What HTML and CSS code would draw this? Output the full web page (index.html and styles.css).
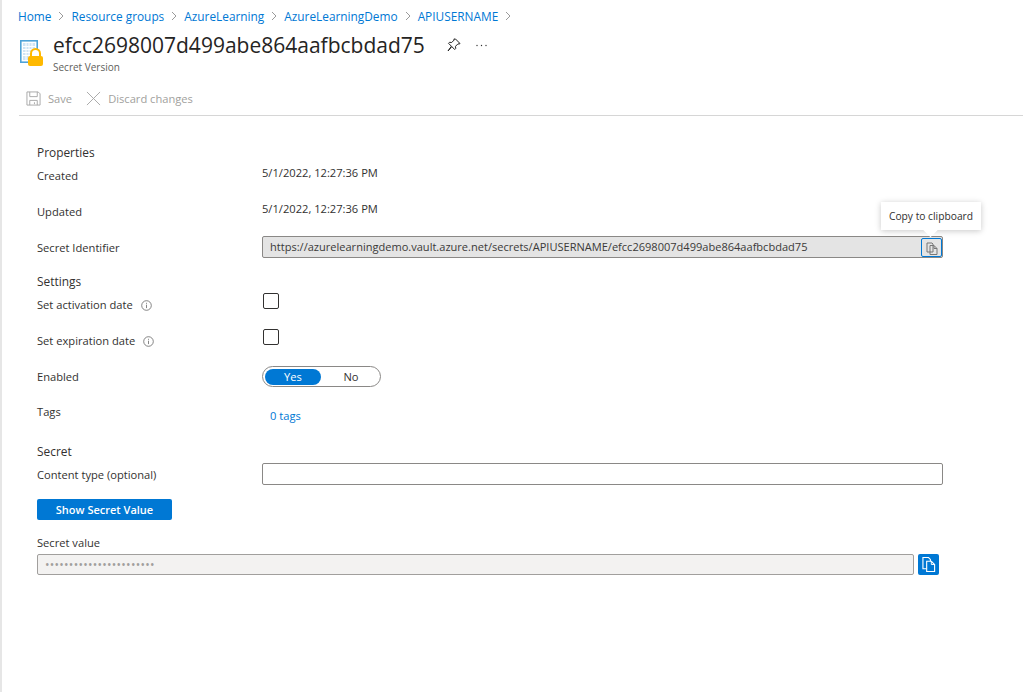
FILE: index.html
```html
<!DOCTYPE html>
<html lang="en">
<head>
<meta charset="utf-8">
<title>Secret Version</title>
<link rel="stylesheet" href="styles.css">
</head>
<body>
<div class="page">
  <nav class="crumbs">
    <a>Home</a><svg class="chev" viewBox="0 0 8 10"><path d="M2 1l4 4-4 4"/></svg>
    <a>Resource groups</a><svg class="chev" viewBox="0 0 8 10"><path d="M2 1l4 4-4 4"/></svg>
    <a>AzureLearning</a><svg class="chev" viewBox="0 0 8 10"><path d="M2 1l4 4-4 4"/></svg>
    <a>AzureLearningDemo</a><svg class="chev" viewBox="0 0 8 10"><path d="M2 1l4 4-4 4"/></svg>
    <a>APIUSERNAME</a><svg class="chev" viewBox="0 0 8 10"><path d="M2 1l4 4-4 4"/></svg>
  </nav>
  <header class="head">
    <svg class="res-icon" viewBox="0 0 23 26">
      <rect x="0.800" y="0.800" width="16.400" height="21.400" fill="#fff" stroke="#4fa3d8" stroke-width="1.600"/>
      <rect x="3" y="3" width="12" height="17" fill="#cfe4f4"/>
      <path d="M3 6.500h12M3 9.500h12M3 12.500h12M3 15.500h12M6 3v17M9 3v17M12 3v17" stroke="#fff" stroke-width="1"/>
      <path d="M11 16.500v-3a4.500 4.500 0 0 1 9 0v3" fill="#fff" stroke="#ffb900" stroke-width="2"/>
      <rect x="8" y="16" width="15" height="10" rx="2" fill="#ffb900"/>
    </svg>
    <div class="titles">
      <div class="title-row">
        <h1>efcc2698007d499abe864aafbcbdad75</h1>
        <svg class="pin" viewBox="0 0 14 14"><path d="M8.500 1l4.500 4.500-1 .6-1-.3-2.500 2.500.2 2.200-1 1L4.800 8.600 1 13l3.400-4.800L1.500 5.300l1-1 2.200.2L7.200 2l-.3-1z" fill="none" stroke="#222" stroke-width="1"/></svg>
        <svg class="more" viewBox="0 0 11 3"><circle cx="1" cy="1.500" r=".7"/><circle cx="5.500" cy="1.500" r=".7"/><circle cx="10" cy="1.500" r=".7"/></svg>
      </div>
      <div class="subtitle">Secret Version</div>
    </div>
  </header>
  <div class="toolbar">
    <span class="tool">
      <svg class="tool-icon" viewBox="0 0 16 16"><path d="M1 1h12l2 2v12H1zM4 1v5h8V1M4 15v-5h8v5M9 12v2" fill="none" stroke="#a6a6a6"/></svg>Save
    </span>
    <span class="tool">
      <svg class="tool-icon" viewBox="0 0 16 16"><path d="M1 1l14 14M15 1L1 15" fill="none" stroke="#a6a6a6"/></svg>Discard changes
    </span>
  </div>
  <main class="form">
    <div class="section s1">Properties</div>
    <div class="row h36 prop"><span class="label">Created</span><span class="value up">5/1/2022, 12:27:36 PM</span></div>
    <div class="row h36 prop"><span class="label">Updated</span><span class="value up">5/1/2022, 12:27:36 PM</span></div>
    <div class="row h22 id-row">
      <span class="label">Secret Identifier</span>
      <div class="id-box">
        <span class="id-text">https://azurelearningdemo.vault.azure.net/secrets/APIUSERNAME/efcc2698007d499abe864aafbcbdad75</span>
        <span class="copy-focus"><svg class="copy-svg" viewBox="0 0 12 13"><path d="M1 1h5l1 1v8H1z M4 3.500h4l3 3v6H4z M8 3.500v3h3" fill="#e4e4e4" stroke="#777" stroke-width="1"/></svg></span>
        <div class="tip">Copy to clipboard</div>
      </div>
    </div>
    <div class="section s2">Settings</div>
    <div class="row h36"><span class="label">Set activation date<svg class="info" viewBox="0 0 11 11"><circle cx="5.500" cy="5.500" r="4.800"/><path d="M5.500 4.700v3.400M5.500 2.800v1"/></svg></span><span class="check"></span></div>
    <div class="row h36"><span class="label">Set expiration date<svg class="info" viewBox="0 0 11 11"><circle cx="5.500" cy="5.500" r="4.800"/><path d="M5.500 4.700v3.400M5.500 2.800v1"/></svg></span><span class="check"></span></div>
    <div class="row h36"><span class="label">Enabled</span><div class="toggle"><span class="on">Yes</span><span class="off">No</span></div></div>
    <div class="row h36 tags"><span class="label">Tags</span><a class="tag-link">0 tags</a></div>
    <div class="section s3">Secret</div>
    <div class="row h22"><span class="label">Content type (optional)</span><span class="text-input"></span></div>
    <button class="primary">Show Secret Value</button>
    <div class="value-label">Secret value</div>
    <div class="secret-row">
      <div class="secret-box">•••••••••••••••••••••••</div>
      <span class="copy-btn"><svg class="copy-white" viewBox="0 0 15 17"><path d="M1 1h6l2 2v10H1z" fill="#0078d4" stroke="#fff" stroke-width="1.200"/><path d="M5 5h5l3.500 3.500V16H5z" fill="#0078d4" stroke="#fff" stroke-width="1.200"/><path d="M10 5v3.500h3.500" fill="none" stroke="#fff"/></svg></span>
    </div>
  </main>
</div>
</body>
</html>
```
FILE: styles.css
```css
* { box-sizing: border-box; }
html, body { margin: 0; padding: 0; background: #fff; }
body {
  font-family: "Open Sans", "Noto Sans", "Liberation Sans", sans-serif;
  font-size: 11.150px;
  color: #323130;
}
.page {
  height: 692px;
  overflow: hidden;
  border-left: 2px solid #e6e6e6;
  padding-top: 7px;
}
.crumbs {
  display: flex;
  align-items: center;
  height: 18px;
  padding-left: 16px;
  font-size: 11.850px;
  color: #0078d4;
  white-space: nowrap;
}
.chev { width: 8px; height: 10px; margin: 0 6px; fill: none; stroke: #808080; stroke-width: .8; }
.head { display: flex; height: 57px; padding-left: 18px; padding-top: 6px; }
.res-icon { width: 23px; height: 26px; margin-top: 9px; flex: none; }
.titles { margin-left: 10px; }
.title-row { display: flex; align-items: center; height: 28px; }
h1 { margin: 0; font-size: 21px; font-weight: 400; color: #252423; }
.pin { width: 14px; height: 14px; margin-left: 22px; }
.more { width: 11px; height: 3px; margin-left: 15px; fill: #333; }
.subtitle { font-size: 10px; color: #605e5c; margin-top: 1px; }
.toolbar {
  display: flex;
  align-items: center;
  gap: 14px;
  height: 34px;
  margin-left: 17px;
  border-bottom: 1px solid #d6d6d6;
  padding-left: 7px;
  color: #a19f9d;
}
.tool { display: flex; align-items: center; }
.tool-icon { width: 15px; height: 15px; margin-right: 7px; }
.form { padding: 28px 0 0 35px; width: 944px; }
.section { font-size: 11.900px; height: 18px; line-height: 18px; color: #323130; }
.s1 { line-height: 16px; }
.s2 { margin-top: 14px; }
.s3 { margin-top: 8px; }
.row { display: flex; align-items: flex-start; }
.h36 { height: 36px; }
.h22 { height: 22px; align-items: center; margin-top: 3px; }
.h22 > .label { padding-top: 2px; }
.id-row { margin-top: 2px; }
.label { display: flex; align-items: center; width: 225px; flex: none; line-height: 16px; }
.h36 > .label { margin-top: 7px; }
.prop > .label { margin-top: 6px; }
.value { color: #323130; }
.up { margin-top: 3px; line-height: 16px; }
.id-box {
  position: relative;
  display: flex;
  align-items: center;
  width: 681px;
  height: 22px;
  background: #e4e4e4;
  border: 1px solid #8a8886;
  border-radius: 2px;
  padding-left: 7px;
  color: #3b3a39;
  white-space: nowrap;
}
.id-text { flex: 1; font-size: 11.050px; padding-bottom: 2px; }
.copy-focus {
  display: flex; align-items: center; justify-content: center;
  width: 21px; height: 19px;
  padding-top: 3px;
  border: 1px solid #0078d4;
  border-radius: 2px;
}
.copy-svg { width: 12px; height: 13px; }
.tip {
  position: absolute;
  right: -39px;
  top: -35px;
  width: 100px;
  height: 28px;
  background: #fff;
  box-shadow: 0 1px 6px rgba(0,0,0,.22);
  font-size: 10.250px;
  line-height: 29px;
  text-align: center;
  color: #323130;
}
.tip::after {
  content: "";
  position: absolute;
  left: 44px;
  bottom: -5px;
  width: 11px;
  height: 11px;
  background: #fff;
  transform: rotate(45deg);
}
.info { width: 11px; height: 11px; margin-left: 8px; fill: none; stroke: #666; stroke-width: .8; }
.check { width: 16px; height: 16px; margin: 3px 0 0 1px; border: 1px solid #323130; border-radius: 2px; background: #fff; }
.toggle {
  display: flex;
  align-items: center;
  width: 119px;
  height: 21px;
  margin-top: 4px;
  padding: 2px;
  border: 1px solid #8a8886;
  border-radius: 11px;
}
.on { width: 56px; height: 16px; line-height: 15px; border-radius: 8px; background: #0078d4; color: #fff; text-align: center; }
.off { flex: 1; padding-left: 3px; text-align: center; color: #323130; }
.tags > .label { margin-top: 6px; }
.tag-link { margin: 10px 0 0 8px; color: #0078d4; line-height: 16px; }
.text-input { width: 681px; height: 22px; border: 1px solid #8a8886; border-radius: 2px; background: #fff; }
.primary {
  display: block;
  width: 135px;
  height: 21px;
  margin-top: 14px;
  padding: 0;
  border: 0;
  border-radius: 2px;
  background: #0078d4;
  color: #fff;
  font: 600 11px "Open Sans", sans-serif;
}
.value-label { margin-top: 15px; height: 19px; line-height: 16px; }
.secret-row { display: flex; align-items: center; gap: 4px; }
.secret-box {
  width: 877px;
  height: 21px;
  line-height: 19px;
  padding-left: 7px;
  background: #f3f2f1;
  border: 1px solid #a19f9d;
  border-radius: 2px;
  color: #a19f9d;
  font-size: 12px;
  letter-spacing: .26px;
}
.copy-btn { display: flex; align-items: center; justify-content: center; width: 21px; height: 21px; background: #0078d4; border-radius: 2px; }
.copy-white { width: 14px; height: 17px; }
```
